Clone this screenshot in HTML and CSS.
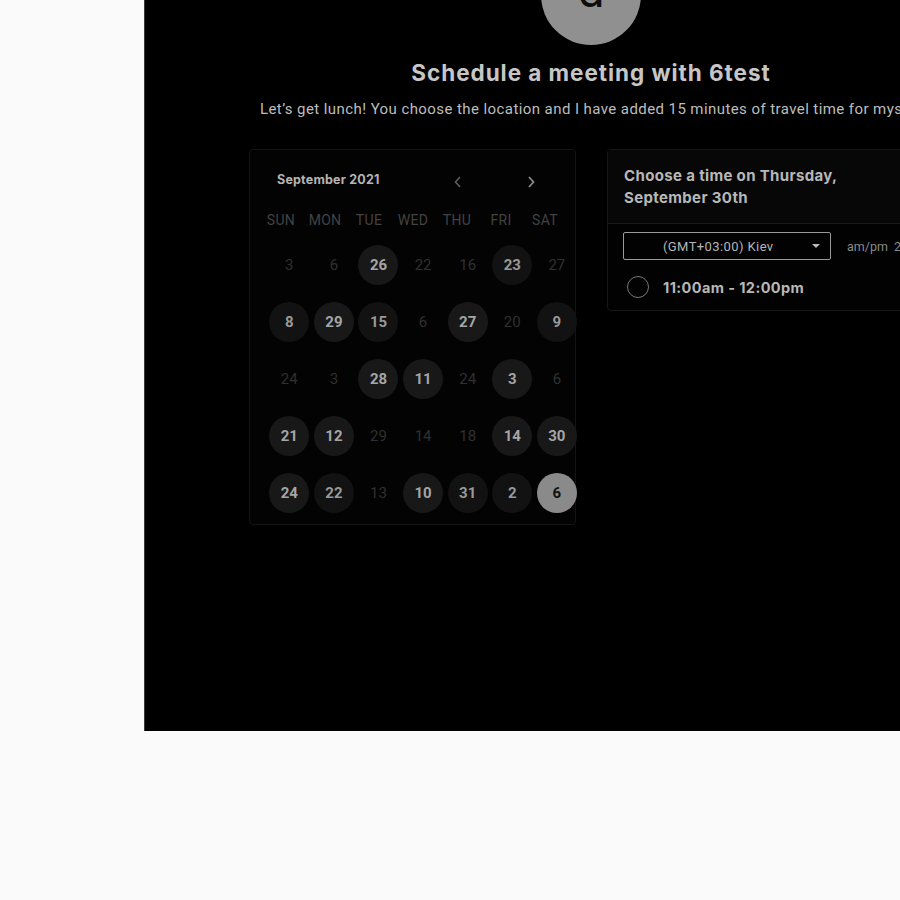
FILE: index.html
```html
<!DOCTYPE html>
<html>
<head>
<meta charset="utf-8">
<link rel="stylesheet" href="styles.css">
</head>
<body>
<div class="stage">
  <div class="content">
    <div class="head">
      <div class="avatar"><span>d</span></div>
      <h1 class="title">Schedule a meeting with 6test</h1>
      <p class="subtitle">Let’s get lunch! You choose the location and I have added 15 minutes of travel time for myself.</p>
    </div>
    <div class="cards">
      <div class="calendar">
        <div class="cal-head">
          <span class="month">September 2021</span>
          <span class="chev prev">
            <svg width="10" height="14" viewBox="0 0 10 14"><path d="M7 2 L2.5 7 L7 12" fill="none" stroke="currentColor" stroke-width="1.6"/></svg>
          </span>
          <span class="chev next">
            <svg width="10" height="14" viewBox="0 0 10 14"><path d="M3 2 L7.5 7 L3 12" fill="none" stroke="currentColor" stroke-width="1.8"/></svg>
          </span>
        </div>
        <div class="weekdays">
          <span>SUN</span><span>MON</span><span>TUE</span><span>WED</span><span>THU</span><span>FRI</span><span>SAT</span>
        </div>
        <div class="days">
          <span class="day off">3</span><span class="day off">6</span><span class="day on">26</span><span class="day off">22</span><span class="day off">16</span><span class="day on dim">23</span><span class="day off">27</span>
          <span class="day on dim">8</span><span class="day on">29</span><span class="day on dim">15</span><span class="day off">6</span><span class="day on">27</span><span class="day off">20</span><span class="day on dim">9</span>
          <span class="day off">24</span><span class="day off">3</span><span class="day on">28</span><span class="day on">11</span><span class="day off">24</span><span class="day on">3</span><span class="day off">6</span>
          <span class="day on">21</span><span class="day on">12</span><span class="day off">29</span><span class="day off">14</span><span class="day off">18</span><span class="day on">14</span><span class="day on">30</span>
          <span class="day on">24</span><span class="day on dim">22</span><span class="day off">13</span><span class="day on">10</span><span class="day on dim">31</span><span class="day on dim">2</span><span class="day sel">6</span>
        </div>
      </div>
      <div class="times">
        <div class="times-head">Choose a time on Thursday, September 30th</div>
        <div class="times-controls">
          <div class="tz">
            <span>(GMT+03:00) Kiev</span>
            <svg class="caret" width="8" height="4" viewBox="0 0 8 4"><path d="M0 0 H8 L4 4 Z" fill="currentColor"/></svg>
          </div>
          <span class="fmt">am/pm</span>
          <span class="fmt">24h</span>
        </div>
        <div class="slot">
          <span class="radio"></span>
          <span class="slot-text">11:00am - 12:00pm</span>
        </div>
      </div>
    </div>
  </div>
</div>
</body>
</html>
```

FILE: styles.css
```css
html, body {
  margin: 0;
  padding: 0;
  overflow: hidden;
}
body {
  background: #fafafa;
  font-family: Roboto, "Liberation Sans", sans-serif;
  width: 900px;
  height: 900px;
}
.stage {
  margin-left: 144px;
  width: 756px;
  height: 731px;
  background: #000;
  overflow: hidden;
  box-shadow: inset 1px 0 0 #3a3a3a;
}
.content {
  width: 894px;
}
.head {
  display: flex;
  flex-direction: column;
  align-items: center;
}
.avatar {
  width: 100px;
  height: 100px;
  margin-top: -55px;
  border-radius: 50%;
  background: #909090;
  display: flex;
  justify-content: center;
  align-items: flex-start;
  overflow: hidden;
}
.avatar span {
  font-family: Roboto, sans-serif;
  font-size: 48px;
  line-height: 48px;
  margin-top: 22px;
  color: #0d0d0d;
}
.title {
  margin: 14px 0 0;
  font-family: Inter, "Liberation Sans", sans-serif;
  font-weight: 700;
  font-size: 22.5px;
  line-height: 28px;
  color: #c6c6c6;
  letter-spacing: 0.95px;
}
.subtitle {
  margin: 12px 0 0;
  font-size: 15px;
  line-height: 20px;
  color: #bdbdbd;
  white-space: nowrap;
  align-self: flex-start;
  padding-left: 116px;
  letter-spacing: 0.42px;
}
.cards {
  display: flex;
  gap: 31px;
  align-items: flex-start;
  padding-left: 105px;
  margin-top: 30px;
}
.calendar {
  width: 325px;
  height: 374px;
  border: 1px solid #141414;
  border-radius: 4px;
  background: #030303;
}
.cal-head {
  display: flex;
  align-items: center;
  height: 20px;
  margin-top: 19px;
  padding-left: 27px;
}
.month {
  font-family: Inter, "Liberation Sans", sans-serif;
  font-weight: 700;
  font-size: 12.5px;
  letter-spacing: 0.2px;
  color: #b5b5b5;
  width: 176px;
}
.chev {
  display: flex;
  color: #5e5e5e;
  margin-top: 6px;
}
.chev.next {
  margin-left: 63px;
  color: #8a8a8a;
  margin-top: 5px;
}
.weekdays {
  display: grid;
  grid-template-columns: repeat(7, 44px);
  padding-left: 9px;
  margin-top: 21px;
  height: 20px;
  align-items: center;
}
.weekdays span {
  text-align: center;
  font-size: 14px;
  color: #424242;
  letter-spacing: 0.3px;
}
.days {
  display: grid;
  grid-template-columns: repeat(7, 44.6px);
  grid-auto-rows: 57px;
  padding-left: 17px;
  margin-top: 6px;
}
.day {
  justify-self: center;
  align-self: center;
  width: 40px;
  height: 40px;
  border-radius: 50%;
  display: flex;
  align-items: center;
  justify-content: center;
  font-size: 15px;
}
.day.off {
  color: #303030;
}
.day.on {
  background: #181818;
  color: #a5a5a5;
  font-weight: 700;
}
.day.on.dim {
  background: #121212;
  color: #999;
}
.day.sel {
  background: #8a8a8a;
  color: #111;
  font-weight: 700;
}
.times {
  width: 325px;
  border: 1px solid #161616;
  border-radius: 4px;
  background: #020202;
}
.times-head {
  padding: 15px 60px 14px 16px;
  font-family: Inter, "Liberation Sans", sans-serif;
  font-weight: 700;
  font-size: 15px;
  line-height: 22px;
  letter-spacing: 0.35px;
  color: #b8b8b8;
  background: #070707;
  border-bottom: 1px solid #1a1a1a;
}
.times-controls {
  display: flex;
  align-items: center;
  padding: 8px 0 0 15px;
  gap: 16px;
}
.tz {
  width: 206px;
  height: 26px;
  border: 1px solid #9a9a9a;
  border-radius: 2px;
  display: flex;
  align-items: center;
  position: relative;
  color: #b5b5b5;
  font-size: 13px;
  letter-spacing: 0.4px;
}
.tz span {
  margin-left: 39px;
}
.tz .caret {
  position: absolute;
  right: 10px;
  top: 11px;
  color: #bbb;
}
.fmt {
  font-size: 12.5px;
  color: #8a8a8a;
}
.fmt + .fmt {
  margin-left: -10px;
}
.slot {
  display: flex;
  align-items: center;
  padding: 16px 0 12px 19px;
}
.radio {
  width: 20px;
  height: 20px;
  border: 1.5px solid #777;
  border-radius: 50%;
}
.slot-text {
  margin-left: 14px;
  font-family: Inter, "Liberation Sans", sans-serif;
  font-weight: 700;
  font-size: 14.5px;
  letter-spacing: 0.4px;
  color: #b8b8b8;
}
```
